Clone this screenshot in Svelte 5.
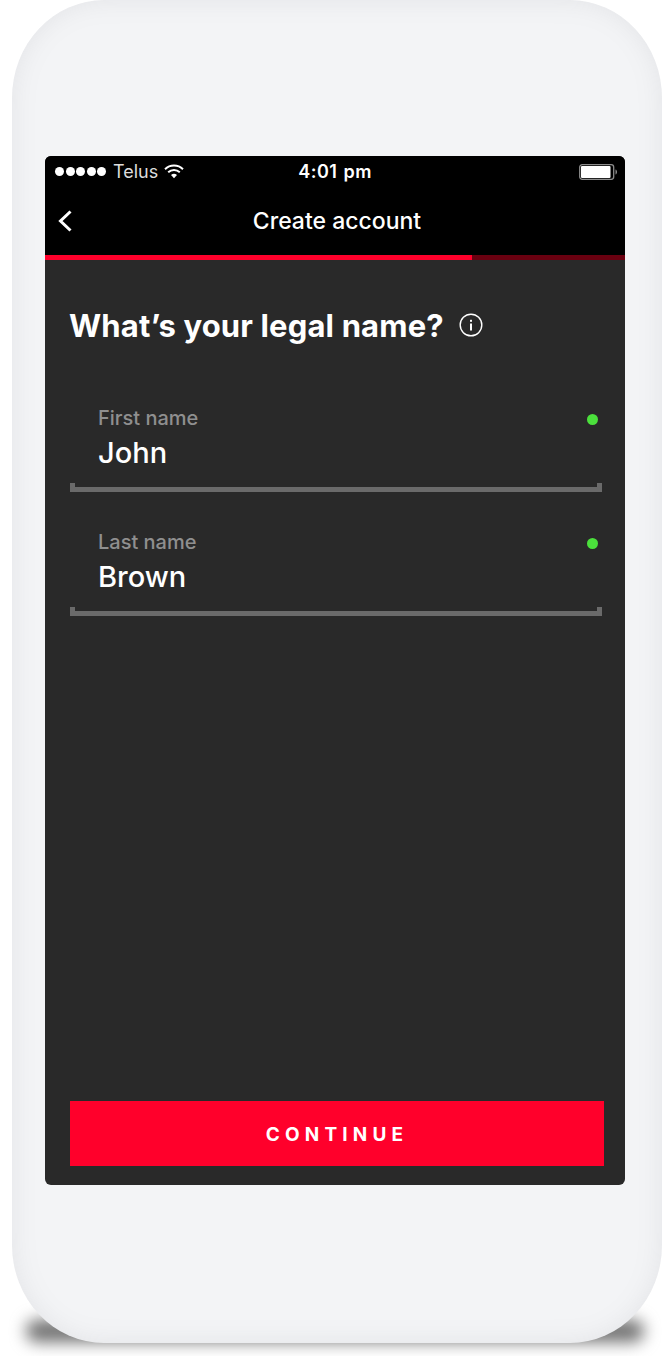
<script>
  const fields = [
    { label: 'First name', value: 'John' },
    { label: 'Last name', value: 'Brown' }
  ];
</script>

<div class="page">
  <div class="ground"></div>
  <div class="phone">
    <main class="screen">
      <header class="top">
        <div class="status">
          <div class="carrier">
            <span class="signal">
              {#each [0, 1, 2, 3, 4] as i (i)}
                <i></i>
              {/each}
            </span>
            <span>Telus</span>
            <svg class="wifi" width="20" height="15" viewBox="0 0 20 15">
              <path d="M1 5.2a12.8 12.8 0 0 1 18 0" fill="none" stroke="#fff" stroke-width="1.9" />
              <path d="M4.2 8.3a8.3 8.3 0 0 1 11.6 0" fill="none" stroke="#fff" stroke-width="1.9" />
              <path d="M7 11.1a4.4 4.4 0 0 1 6 0L10 14.2z" fill="#fff" />
            </svg>
          </div>
          <div class="time">4:01 pm</div>
          <svg class="battery" width="38" height="16" viewBox="0 0 38 16">
            <rect x="0.7" y="0.7" width="34" height="14.6" rx="2.5" fill="none" stroke="#8c8c8c" stroke-width="1.3" />
            <rect x="2" y="2" width="29.5" height="12" rx="1" fill="#fff" />
            <path d="M36.5 5.5c1 .3 1.5 1.3 1.5 2.5s-.5 2.2-1.5 2.5z" fill="#8c8c8c" />
          </svg>
        </div>
        <div class="nav">
          <svg class="back" width="16" height="24" viewBox="0 0 16 24">
            <path d="M13.5 2.5 3.5 12l10 9.5" fill="none" stroke="#fff" stroke-width="3" />
          </svg>
          <h2>Create account</h2>
        </div>
        <div class="progress"><div class="bar" style="width: 73.6%"></div></div>
      </header>

      <section class="content">
        <h1>
          What’s your legal name?
          <svg width="24" height="24" viewBox="0 0 24 24">
            <circle cx="12" cy="12" r="10.8" fill="none" stroke="#fff" stroke-width="1.4" />
            <rect x="11" y="10.5" width="2" height="7" fill="#fff" />
            <rect x="11" y="6.8" width="2" height="2" fill="#fff" />
          </svg>
        </h1>

        {#each fields as f (f.label)}
          <div class="field">
            <div class="label">{f.label}</div>
            <div class="value">{f.value}</div>
            <span class="dot"></span>
          </div>
        {/each}

        <button class="continue">CONTINUE</button>
      </section>
    </main>
  </div>
</div>

<style>
  :global(body) {
    background: #fff;
    font-family: "Inter", "Liberation Sans", sans-serif;
  }

  .page {
    position: relative;
    width: 666px;
    height: 1356px;
    padding-left: 12px;
    box-sizing: border-box;
    overflow: hidden;
  }

  /* soft shadow the phone casts under its bottom edge */
  .ground {
    position: absolute;
    left: 26px;
    width: 618px;
    top: 1320px;
    height: 22px;
    background: #6f6f6f;
    border-radius: 14px;
    filter: blur(8px);
  }

  .phone {
    position: relative;
    width: 650px;
    height: 1343px;
    box-sizing: border-box;
    padding: 156px 37px 158px 33px;
    background: #f3f4f6;
    border-radius: 92px / 98px;
    box-shadow: inset 0 0 26px rgba(120, 125, 135, 0.13);
  }

  .screen {
    display: flex;
    flex-direction: column;
    height: 100%;
    background: #292929;
    border-radius: 6px;
    overflow: hidden;
    color: #fff;
  }

  .top { background: #000; }

  .status {
    position: relative;
    display: flex;
    align-items: center;
    justify-content: space-between;
    height: 31px;
    padding: 0 8px 0 10px;
    font-size: 18px;
  }

  .carrier {
    display: flex;
    align-items: center;
    gap: 7px;
    color: #ddd;
  }

  .signal { display: flex; gap: 1.5px; }

  .signal i {
    width: 9px;
    height: 9px;
    border-radius: 50%;
    background: #fff;
  }

  .wifi { margin-left: -1px; }

  .time {
    position: absolute;
    left: 0;
    right: 0;
    text-align: center;
    font-weight: 600;
    letter-spacing: 0.5px;
    word-spacing: 1px;
  }

  .nav {
    position: relative;
    display: flex;
    align-items: center;
    justify-content: center;
    height: 68px;
    padding-left: 4px;
  }

  .back {
    position: absolute;
    left: 12px;
    top: 22px;
  }

  h2 {
    margin: 0;
    font-size: 23px;
    font-weight: 500;
  }

  .progress {
    height: 5px;
    background: #6a0010;
  }

  .bar {
    height: 100%;
    background: #ff002b;
  }

  .content {
    flex: 1;
    display: flex;
    flex-direction: column;
    padding: 0 21px 19px 25px;
  }

  h1 {
    display: flex;
    align-items: center;
    gap: 15px;
    height: 44px;
    margin: 43px 0 21px -1px;
    font-size: 31px;
    font-weight: 700;
    letter-spacing: 0.15px;
    white-space: nowrap;
  }

  .field {
    position: relative;
    width: 532px;
    height: 124px;
    box-sizing: border-box;
    padding: 0 28px;
  }

  .field::after {
    content: "";
    position: absolute;
    left: 0;
    right: 0;
    bottom: 0;
    height: 9px;
    border: 5px solid #6a6a6a;
    border-top: 0;
    box-sizing: border-box;
  }

  .label {
    padding-top: 38px;
    font-size: 20px;
    line-height: 24px;
    color: #8f8f8f;
    font-weight: 500;
  }

  .value {
    margin-top: 5px;
    font-size: 29px;
    line-height: 36px;
    font-weight: 500;
  }

  .dot {
    position: absolute;
    right: 4px;
    top: 46px;
    width: 11px;
    height: 11px;
    border-radius: 50%;
    background: #4be03c;
  }

  .continue {
    margin-top: auto;
    height: 65px;
    width: 534px;
    border: 0;
    padding: 1px 0 0;
    background: #ff002b;
    color: #fff;
    font-family: inherit;
    font-size: 19px;
    font-weight: 700;
    letter-spacing: 5.2px;
  }
</style>
